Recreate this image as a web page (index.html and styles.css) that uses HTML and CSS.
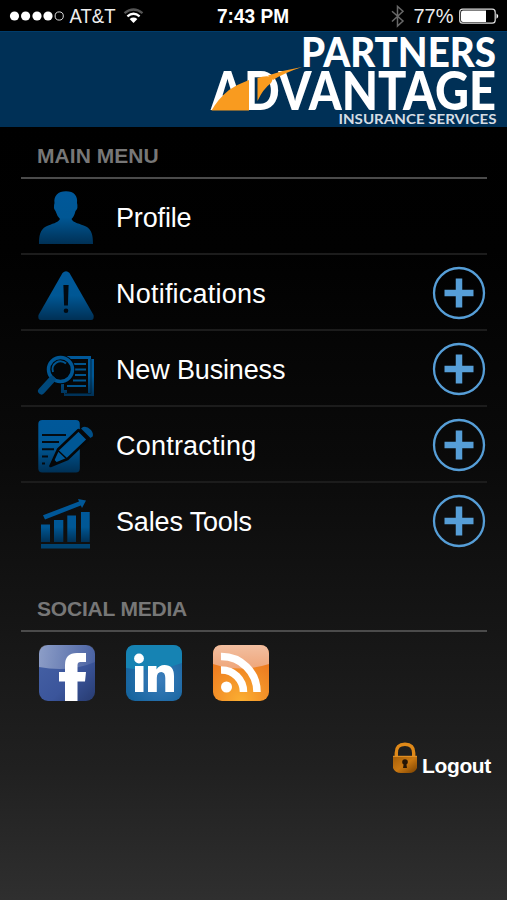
FILE: index.html
```html
<!DOCTYPE html>
<html lang="en">
<head>
<meta charset="utf-8">
<title>Partners Advantage</title>
<link rel="stylesheet" href="styles.css">
</head>
<body>
<div class="status">
  <svg width="507" height="31" viewBox="0 0 507 31">
    <g fill="#fff"><circle cx="14.5" cy="16" r="4.6"/><circle cx="25.6" cy="16" r="4.6"/><circle cx="37" cy="16" r="4.6"/><circle cx="48" cy="16" r="4.6"/></g>
    <circle cx="59.2" cy="16" r="4.1" fill="none" stroke="#ddd"/>
    <text x="69.5" y="23" class="st" textLength="46" lengthAdjust="spacingAndGlyphs">AT&amp;T</text>
    <g fill="none" stroke-width="2.3"><path d="M124.5 13.2Q133.5 5.8 142.5 13.2" stroke="#555"/><path d="M127.4 16.3Q133.5 11.2 139.6 16.3" stroke="#fff"/></g>
    <path d="M129.6 19Q133.5 16.2 137.4 19L133.5 23Z" fill="#fff"/>
    <text x="217" y="23" class="st bold" textLength="72" lengthAdjust="spacingAndGlyphs">7:43 PM</text>
    <path d="M392 11.2L403 21L397.5 26V6.5L403 11.3L392 21.5" fill="none" stroke="#686868" stroke-width="1.5"/>
    <text x="413.5" y="23" class="st" textLength="40" lengthAdjust="spacingAndGlyphs">77%</text>
    <rect x="459.7" y="9.2" width="35.5" height="14" rx="3" fill="none" stroke="#ddd" stroke-width="1.2"/>
    <path d="M463 10.5H486V22H463Q461 22 461 20V12.500Q461 10.500 463 10.500Z" fill="#fff"/>
    <path d="M496.5 13.5Q500 16 496.5 18.8Z" fill="#fff"/>
  </svg>
</div>
<header class="banner">
  <svg width="307" height="96" viewBox="200 31 307 96">
    <text x="301" y="66.5" class="logo" font-size="41" textLength="195" lengthAdjust="spacingAndGlyphs">PARTNERS</text>
    <text x="211" y="109.5" class="logo" font-size="53" textLength="285" lengthAdjust="spacingAndGlyphs">ADVANTAGE</text>
    <path d="M211.500 110.500Q218 99 229 90Q238 84 249 80V110.500Z" fill="#f99b1f"/>
    <path d="M257.500 78Q264 75.500 270 76.500Q274 79 271 83Q263 89 257.500 101Z" fill="#f99b1f"/>
    <path d="M268 75.500Q284 70 302 67Q284 73 273 80Z" fill="#f99b1f"/>
    <text x="338.5" y="123.8" class="sub" textLength="158" lengthAdjust="spacingAndGlyphs">INSURANCE SERVICES</text>
  </svg>
</header>
<main>
  <h2>MAIN MENU</h2>
  <ul class="menu">
    <li>
      <svg class="icon" viewBox="37 179 60 76">
        <defs><linearGradient id="b" x1="0" y1="0" x2="0" y2="1"><stop offset="0" stop-color="#00589a"/><stop offset=".5" stop-color="#005794"/><stop offset="1" stop-color="#003055"/></linearGradient></defs>
        <path d="M66 191.300C74 191.300 78 196 77 203Q78.500 208 75.500 211Q74 217 71.500 219C73 223 80 223.500 86 226.500C92 229.500 93 236 93 244H39C39 236 40 229.500 46 226.500C52 223.500 58 223 60 219Q57 216 55.500 211Q53 208 54.500 203C53.500 196 58 191.300 66 191.300Z" fill="url(#b)"/>
      </svg>
      <span class="label">Profile</span>
    </li>
    <li>
      <svg class="icon" viewBox="37 255 60 76">
        <path d="M62.500 273Q66 269.500 69.500 273L93.500 315Q94.500 320 91 320H41Q37.500 320 38.500 315Z" fill="url(#b)"/>
        <path d="M63.400 285H68.600L67.900 305.500H64.100Z" fill="#010a12"/><circle cx="66" cy="310.800" r="2.300" fill="#010a12"/>
      </svg>
      <span class="label wide">Notifications</span>
      <svg class="plus" viewBox="0 0 54 54"><circle cx="27" cy="27" r="25"/><path d="M27 12.500V41.500M12.500 27H41.500"/></svg>
    </li>
    <li>
      <svg class="icon" viewBox="37 331 60 76">
        <path d="M63 356H91V359H94V396H64V393H61V382H64V390H67V393H88V359H70Z" fill="url(#b)"/>
        <path d="M91 359V393.500H65" stroke="#001523" stroke-width=".7" fill="none"/>
        <path d="M73 364H86M75 369.500H86M75 375H86M73 380.500H86M67 386H86" stroke="#00548e" stroke-width="2"/>
        <circle cx="60.500" cy="369.500" r="14.700" fill="#030608"/>
        <circle cx="60.500" cy="369.500" r="12" fill="none" stroke="#005693" stroke-width="3.500"/>
        <path d="M53 372A8 8 0 0 1 66 363.500" fill="none" stroke="#00548e" stroke-width="2"/>
        <path d="M52 379.500L41.500 391" stroke="#00487b" stroke-width="7" stroke-linecap="round"/>
      </svg>
      <span class="label">New Business</span>
      <svg class="plus" viewBox="0 0 54 54"><circle cx="27" cy="27" r="25"/><path d="M27 12.500V41.500M12.500 27H41.500"/></svg>
    </li>
    <li>
      <svg class="icon" viewBox="37 407 60 76">
        <rect x="38.300" y="420" width="41.500" height="52.500" rx="4" fill="url(#b)"/>
        <path d="M42 435H66M42 442H59M42 449.300H54M42 456.500H48M42 463.500H45" stroke="#040b11" stroke-width="2"/>
        <path d="M58 449.500L78.500 430L88 439.500L67.500 459L50.500 466Z" fill="#005795" stroke="#060708" stroke-width="2.600" stroke-linejoin="round"/>
        <path d="M57.500 450L67 459M51 465L53.500 460L56.500 463Z" fill="#060708" stroke="#060708" stroke-width="1.500"/>
        <path d="M81 428.500L83 427Q86.500 425.500 91 430Q94 434 92.500 436.500L90.500 438Z" fill="#004f88"/>
      </svg>
      <span class="label wide">Contracting</span>
      <svg class="plus" viewBox="0 0 54 54"><circle cx="27" cy="27" r="25"/><path d="M27 12.500V41.500M12.500 27H41.500"/></svg>
    </li>
    <li>
      <svg class="icon" viewBox="37 483 60 76">
        <path d="M41 524.500H50V542H41ZM54 520H63.300V542H54ZM67.300 515.500H76V542H67.300ZM81 512H89.700V542H81Z" fill="url(#b)"/>
        <path d="M41 544H90V548.500H41Z" fill="#004270"/>
        <path d="M43 515.300L79 501.500L78 499L86 500.500L82 508L80.800 505.500L45 519.500Z" fill="#005797"/>
      </svg>
      <span class="label">Sales Tools</span>
      <svg class="plus" viewBox="0 0 54 54"><circle cx="27" cy="27" r="25"/><path d="M27 12.500V41.500M12.500 27H41.500"/></svg>
    </li>
  </ul>
  <h2 class="social-title">SOCIAL MEDIA</h2>
  <div class="social">
    <svg viewBox="0 0 56 56">
      <defs>
        <linearGradient id="f" x1="0" y1="0" x2="1" y2="1"><stop offset="0" stop-color="#4763a6"/><stop offset=".6" stop-color="#3b559b"/><stop offset="1" stop-color="#273b70"/></linearGradient>
        <linearGradient id="g" x1="0" x2="1" y1="0" y2="0"><stop offset="0" stop-color="#fff" stop-opacity=".38"/><stop offset="1" stop-color="#fff" stop-opacity=".08"/></linearGradient>
      </defs>
      <rect width="56" height="56" rx="9" fill="url(#f)"/>
      <path d="M0 22V9Q0 0 9 0H47Q56 0 56 9V17Q30 28 0 22Z" fill="url(#g)"/>
      <path d="M47 8V17H41.500Q38.500 17 38.500 20V27H47L46 36.500H38.500V56H26V36.500H20V27H26V20Q26 8 38 8Z" fill="#fff"/>
    </svg>
    <svg viewBox="0 0 56 56">
      <defs><radialGradient id="l" cx=".6" cy=".6" r=".65"><stop offset="0" stop-color="#3b7dbb"/><stop offset="1" stop-color="#14639d"/></radialGradient></defs>
      <rect width="56" height="56" rx="9" fill="url(#l)"/>
      <path d="M0 23V9Q0 0 9 0H47Q56 0 56 9V18Q30 28 0 23Z" fill="#1683b3"/>
      <g fill="#fff"><circle cx="13" cy="13.500" r="4.900"/><path d="M9 21H17.500V47H9ZM22 21H30.500V24.500Q33 20 38.500 20Q48 20 48 31V47H39.300V33Q39.300 27 35.200 27Q30.800 27 30.800 33V47H22Z"/></g>
    </svg>
    <svg viewBox="0 0 56 56">
      <defs>
        <radialGradient id="r" cx=".5" cy="1" r=".8"><stop offset="0" stop-color="#fbaf32"/><stop offset="1" stop-color="#ed7a20"/></radialGradient>
        <linearGradient id="h" x1="0" x2="0" y1="0" y2="1"><stop offset="0" stop-color="#f2bfa1"/><stop offset="1" stop-color="#efa67a"/></linearGradient>
      </defs>
      <rect width="56" height="56" rx="9" fill="url(#r)"/>
      <path d="M0 19V9Q0 0 9 0H47Q56 0 56 9V19Q28 28 0 19Z" fill="url(#h)"/>
      <circle cx="13.500" cy="42" r="5.500" fill="#fff"/>
      <path d="M8 25A22 22 0 0 1 30.500 47M8 11.500A35.500 35.500 0 0 1 44 47" stroke="#fff" stroke-width="7.500" fill="none"/>
    </svg>
  </div>
  <div class="logout">
    <svg width="24" height="32" viewBox="0 0 24 32">
      <defs><linearGradient id="k" x1="0" y1="0" x2="1" y2="1"><stop offset="0" stop-color="#a35d08"/><stop offset=".5" stop-color="#c97812"/><stop offset="1" stop-color="#784000"/></linearGradient></defs>
      <path d="M3.300 15V11Q3.300 2.200 12 2.200Q20.700 2.200 20.700 11V15" fill="none" stroke="#df8919" stroke-width="3.400"/>
      <path d="M0 14H24V26Q22 31 16 31H8Q2 31 0 26Z" fill="url(#k)"/>
      <path d="M0 14.300H24" stroke="#eb9828"/>
      <circle cx="12" cy="20" r="2.800" fill="#251506"/><path d="M11 20H13L14 26H10Z" fill="#251506"/>
    </svg>
    <span>Logout</span>
  </div>
</main>
</body>
</html>
```
FILE: styles.css
```css
* { box-sizing: border-box; }
body {
  margin: 0;
  width: 507px;
  height: 900px;
  overflow: hidden;
  background: #000;
  font-family: "Liberation Sans", Arial, sans-serif;
  color: #fff;
}
svg { display: block; flex: none; }
.status { height: 31px; background: #000; }
.st { font-size: 19.5px; fill: #eee; }
.bold { font-weight: bold; fill: #fff; }
.banner {
  height: 96px;
  display: flex;
  justify-content: flex-end;
  background: #003056;
  border-top: 1px solid #003c6b;
}
.banner svg { margin-top: -1px; overflow: visible; }
.logo { font-family: Lato, sans-serif; font-weight: 900; fill: #fff; }
.sub { font-family: Lato, sans-serif; font-size: 14px; font-weight: bold; fill: #d5dde4; }
main {
  height: 773px;
  padding: 0 20px 0 21px;
  background: linear-gradient(#000 0, #010101 16%, #0a0a0a 43%, #141414 62%, #202020 83%, #2f2f2f 100%);
}
h2 {
  margin: 0;
  height: 52px;
  padding: 17px 0 0 16px;
  border-bottom: 2px solid #4b4b4b;
  font-size: 21px;
  line-height: 24px;
  letter-spacing: .05px;
  color: #777;
}
.menu { list-style: none; margin: 0; padding: 0; }
.menu li {
  height: 76px;
  display: flex;
  align-items: center;
  padding-left: 16px;
  border-bottom: 2px solid #1c1c1c;
}
.menu li:last-child { border-bottom-color: transparent; }
.icon { width: 60px; height: 76px; align-self: flex-start; }
.label { margin: 3px 0 0 19px; font-size: 27px; line-height: 32px; letter-spacing: -.15px; }
.wide { letter-spacing: .22px; }
.plus { width: 54px; height: 54px; margin: 2px 1px 0 auto; }
.plus circle { fill: none; stroke: #569ed7; stroke-width: 2.3; }
.plus path { stroke: #569ed7; stroke-width: 6.5; }
.social-title { margin-top: 21px; letter-spacing: -.2px; }
.social { display: flex; gap: 31px; padding: 13px 0 0 18px; }
.social svg { width: 56px; height: 56px; }
.logout { display: flex; justify-content: flex-end; align-items: flex-start; gap: 5px; margin: 41px -4px 0 0; }
.logout span { margin-top: 12px; font-size: 21px; line-height: 24px; font-weight: bold; letter-spacing: -.35px; }
```
